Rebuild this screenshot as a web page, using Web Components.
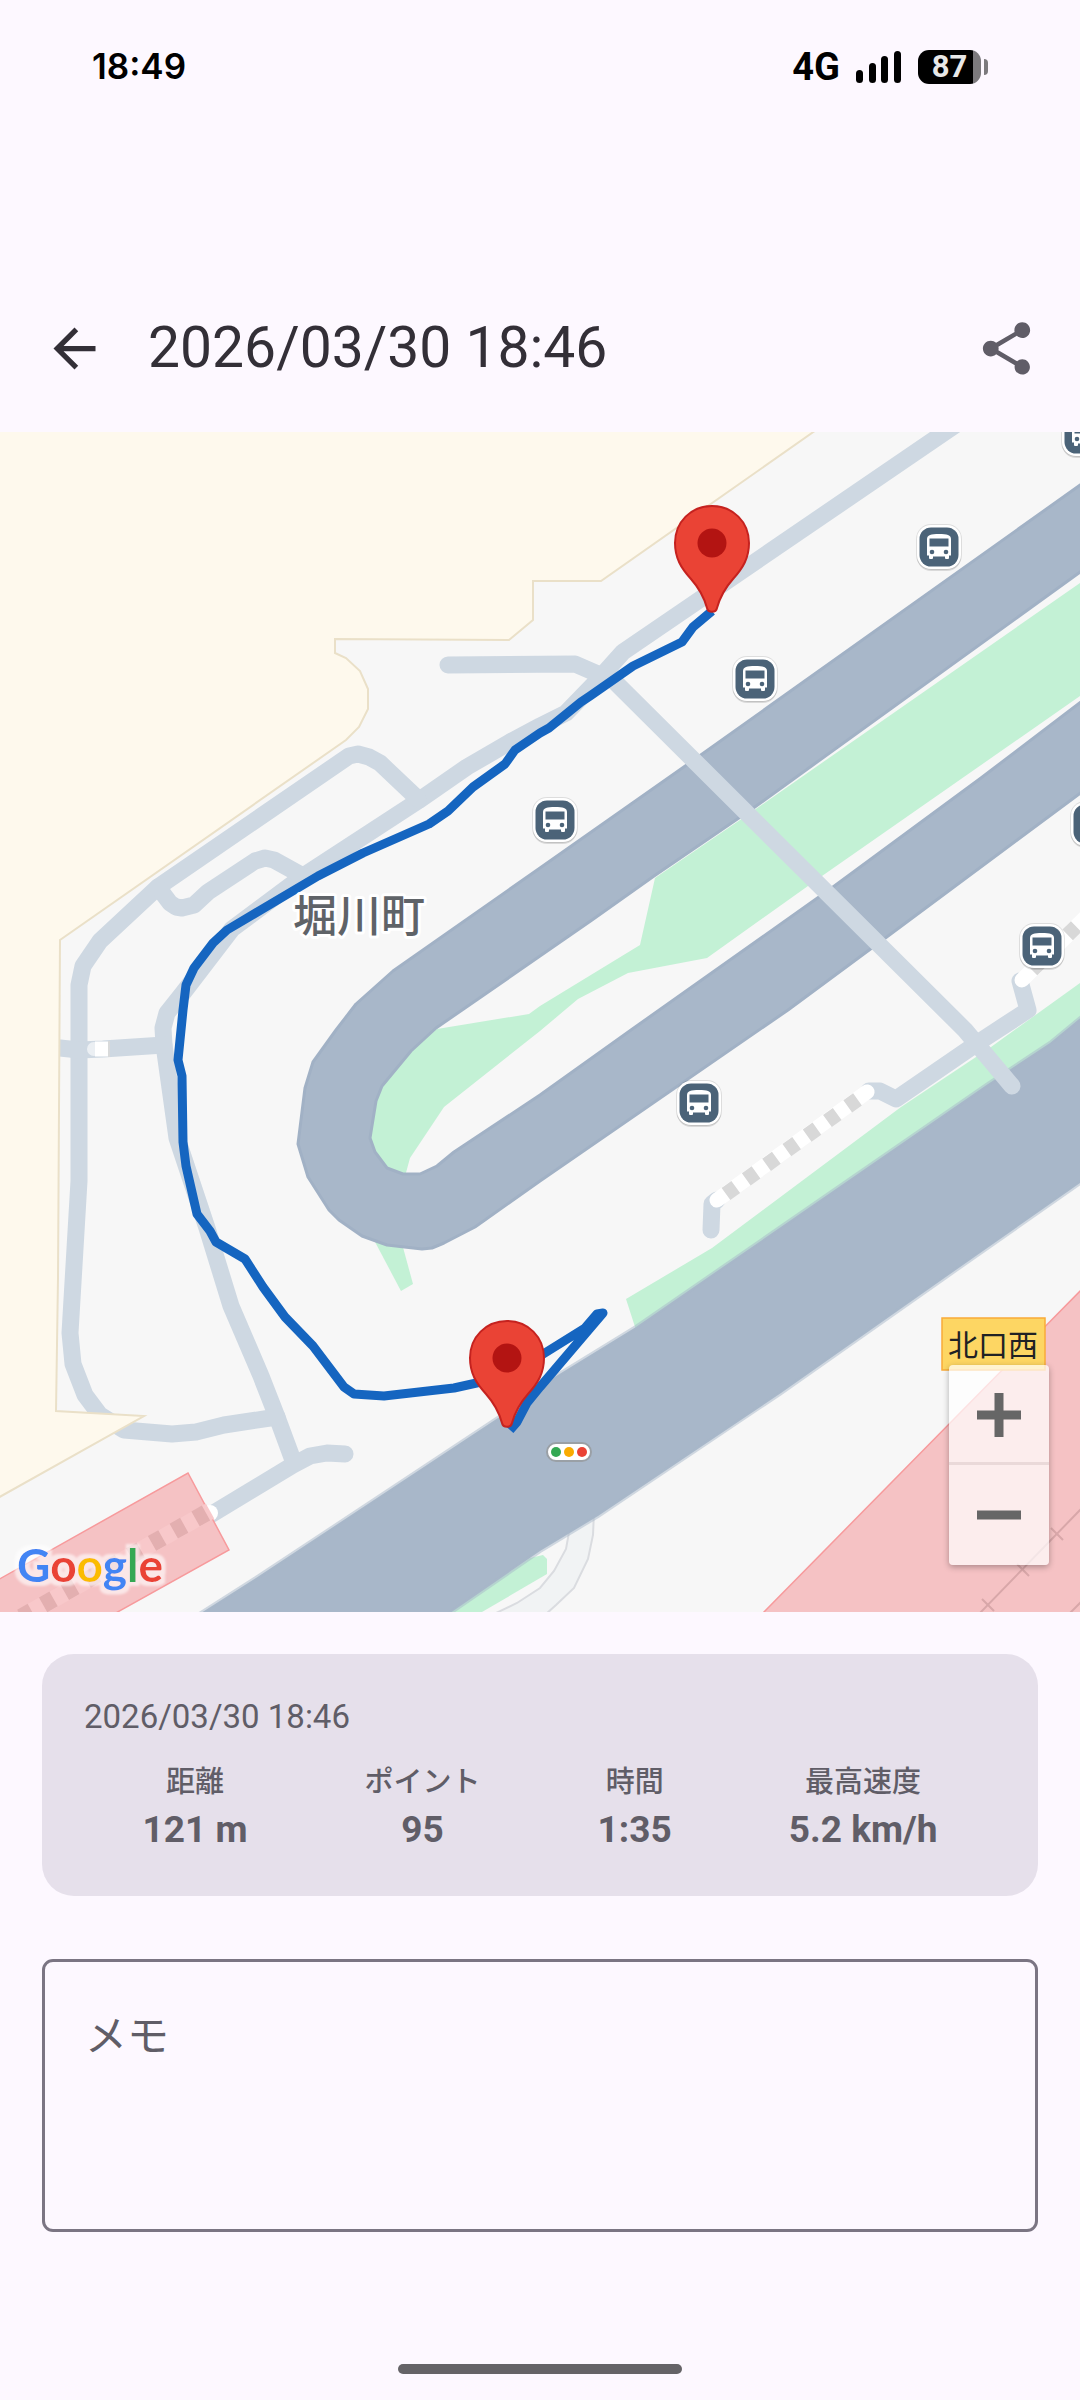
<!DOCTYPE html>
<html lang="ja">
<head>
<meta charset="utf-8">
<meta name="viewport" content="width=device-width, initial-scale=1">
<title>2026/03/30 18:46</title>
<style>
  html, body { margin: 0; }
  body {
    background: #fdf8ff;
    color: #605d67;
    font-family: Roboto, "Noto Sans CJK JP", sans-serif;
  }
</style>
</head>
<body>
<route-page>
  <status-bar slot="status" time="18:49" network="4G" battery="87"></status-bar>
  <app-bar slot="header">2026/03/30 18:46</app-bar>
  <route-map slot="map">
    <zoom-control></zoom-control>
  </route-map>
  <summary-card date="2026/03/30 18:46">
    <stat-item label="距離">121 m</stat-item>
    <stat-item label="ポイント">95</stat-item>
    <stat-item label="時間">1:35</stat-item>
    <stat-item label="最高速度">5.2 km/h</stat-item>
  </summary-card>
  <memo-field label="メモ"></memo-field>
</route-page>

<script>
class RoutePage extends HTMLElement {
  constructor() {
    super();
    const shadow = this.attachShadow({ mode: "open" });
    shadow.innerHTML = `
      <style>
        :host {
          display: flex;
          flex-direction: column;
          min-height: 100vh;
        }
        ::slotted([slot="map"]) {
          flex: 1;
        }
        main {
          display: flex;
          flex-direction: column;
          gap: 63px;
          padding: 42px 42px 132px;
        }
        .home {
          width: 284px;
          height: 10px;
          margin: 0 auto 26px;
          border-radius: 5px;
          background: #656367;
        }
      </style>
      <slot name="status"></slot>
      <slot name="header"></slot>
      <slot name="map"></slot>
      <main><slot></slot></main>
      <div class="home"></div>
    `;
  }
}

class StatusBar extends HTMLElement {
  constructor() {
    super();
    const shadow = this.attachShadow({ mode: "open" });
    shadow.innerHTML = `
      <style>
        :host {
          display: flex;
          justify-content: space-between;
          align-items: flex-start;
          box-sizing: border-box;
          height: 264px;
          padding: 46px 92px 0;
          color: #000;
        }
        .time {
          font: 600 35px/40px Inter, sans-serif;
        }
        .right {
          display: flex;
          align-items: center;
          gap: 16px;
          height: 42px;
        }
        .net {
          font-size: 38px;
          font-weight: 700;
          line-height: 42px;
        }
        .battery {
          display: flex;
          align-items: center;
          gap: 3px;
        }
        .cell {
          width: 63px;
          height: 34px;
          border-radius: 11px;
          background: linear-gradient(90deg, #000 55px, #7c7a7d 55px);
          color: #e8e8e8;
          font-size: 31px;
          font-weight: 700;
          line-height: 34px;
          text-align: center;
        }
        .nub {
          width: 4px;
          height: 16px;
          border-radius: 0 4px 4px 0;
          background: #7c7a7d;
        }
        svg { display: block; }
      </style>
      <span class="time"></span>
      <div class="right">
        <span class="net"></span>
        <svg width="46" height="32" viewBox="0 0 46 32" aria-hidden="true">
          <rect x="0" y="19" width="7" height="13" rx="3.5"/>
          <rect x="13" y="12" width="7" height="20" rx="3.5"/>
          <rect x="25" y="5" width="7" height="27" rx="3.5"/>
          <rect x="38" y="0" width="7" height="32" rx="3.5"/>
        </svg>
        <div class="battery"><span class="cell"></span><span class="nub"></span></div>
      </div>
    `;
    shadow.querySelector(".time").textContent = this.getAttribute("time");
    shadow.querySelector(".net").textContent = this.getAttribute("network");
    shadow.querySelector(".cell").textContent = this.getAttribute("battery");
  }
}

class AppBar extends HTMLElement {
  constructor() {
    super();
    const shadow = this.attachShadow({ mode: "open" });
    shadow.innerHTML = `
      <style>
        :host {
          display: flex;
          align-items: center;
          height: 168px;
          padding: 0 11px;
          color: #332f37;
        }
        h1 {
          flex: 1;
          margin: 0 0 0 11px;
          font-size: 57px;
          font-weight: 400;
          line-height: 74px;
        }
        button {
          display: grid;
          place-items: center;
          width: 126px;
          height: 126px;
          padding: 0;
          border: 0;
          background: none;
          color: inherit;
          cursor: pointer;
        }
        .share { color: #605d67; }
        svg {
          width: 63px;
          height: 63px;
          fill: currentColor;
        }
      </style>
      <button aria-label="戻る">
        <svg viewBox="0 0 24 24"><path d="M20 11H7.83l5.59-5.59L12 4l-8 8 8 8 1.41-1.41L7.83 13H20z"/></svg>
      </button>
      <h1><slot></slot></h1>
      <button class="share" aria-label="共有">
        <svg viewBox="0 0 24 24"><path d="M18 16.08c-.76 0-1.44.3-1.96.77L8.91 12.7c.05-.23.09-.46.09-.7s-.04-.47-.09-.7l7.05-4.11c.54.5 1.25.81 2.04.81 1.66 0 3-1.34 3-3s-1.34-3-3-3-3 1.34-3 3c0 .24.04.47.09.7L8.04 9.81C7.5 9.31 6.79 9 6 9c-1.66 0-3 1.34-3 3s1.34 3 3 3c.79 0 1.5-.31 2.04-.81l7.12 4.16c-.05.21-.08.43-.08.65 0 1.61 1.31 2.92 2.92 2.92s2.92-1.31 2.92-2.92-1.31-2.92-2.92-2.92z"/></svg>
      </button>
    `;
  }
}

const BUS_STOPS = [
  [1084, 434], [939, 547], [755, 679], [555, 820],
  [1093, 824], [1042, 946], [699, 1103],
];

const PATHS = [
  "970,415 623,652 597,681 566,713 540,726 510,742 467,767 418,801 303,876 232,929 183,993 167,1013 163,1028 164,1045 177,1138 207,1228 231,1306 261,1376 277,1417 294,1463",
  "418,799 380,763 369,757 358,754 349,756 158,887 100,941 83,966 79,985 79,1181 70,1333 73,1364 85,1395 100,1415 124,1430 172,1434 196,1432 224,1425 277,1417",
  "158,887 170,903 176,907 182,908 194,905 208,892 255,861 265,858 274,860 303,876",
  "60,1048 79,1050 103,1049 164,1045",
  "212,1514 293,1465 310,1456 327,1453 345,1454",
  "711,1230 712,1204 717,1200",
  "869,1091 880,1091 896,1099 979,1042 1028,1010 1020,981",
];

const TRACK = "712,611 693,627 682,642 633,666 590,696 581,702 549,728 540,733 515,750 505,764 473,787 448,811 429,824 363,853 318,876 227,930 213,943 194,968 186,985 183,1010 178,1060 182,1076 183,1142 186,1166 197,1214 210,1231 216,1242 245,1259 263,1287 285,1317 313,1346 344,1387 354,1394 384,1396 454,1388 490,1380 540,1356 585,1328 597,1314 603,1313 540,1387 527,1403 517,1422 510,1430";

class RouteMap extends HTMLElement {
  constructor() {
    super();
    const shadow = this.attachShadow({ mode: "open" });
    shadow.innerHTML = `
      <style>
        :host {
          display: block;
          position: relative;
          min-height: 600px;
          overflow: hidden;
          background: #f7f7f7;
        }
        .canvas {
          position: absolute;
          width: 100%;
          height: 100%;
        }
        .path {
          fill: none;
          stroke: #ced8e2;
          stroke-width: 17;
          stroke-linecap: round;
          stroke-linejoin: round;
        }
        .steps {
          fill: none;
          stroke: #fff;
          stroke-width: 15;
        }
        .steps.gap {
          stroke: #d8d8d8;
          stroke-dasharray: 12 13;
        }
        .green { fill: #c3f1d5; }
        .road {
          fill: #a8b7c9;
          stroke: #a1b1c5;
          stroke-width: 3;
          stroke-linejoin: round;
        }
        .avenue {
          fill: #a8b7c9;
          stroke: #a8b7c9;
          stroke-opacity: 0.5;
          stroke-width: 4;
        }
        .pink {
          fill: #f5c2c4;
          stroke: #f79a9c;
          stroke-width: 1.5;
        }
        .rail {
          fill: none;
          stroke: #d8a7a9;
          stroke-width: 2;
        }
        .town {
          fill: #5f6368;
          stroke: #fff;
          stroke-width: 6;
          stroke-linejoin: round;
          paint-order: stroke;
          font-size: 44px;
          font-weight: 500;
          text-anchor: middle;
        }
        .crossing {
          fill: #202124;
          font-size: 30px;
          text-anchor: middle;
        }
        .track {
          fill: none;
          stroke: #1565c0;
          stroke-width: 9;
          stroke-linejoin: round;
        }
        .logo {
          position: absolute;
          left: 8px;
          bottom: 4px;
          font: 700 46px/1 Lato, sans-serif;
        }
        ::slotted(zoom-control) {
          position: absolute;
          right: 31px;
          bottom: 47px;
        }
      </style>
      <svg class="canvas" viewBox="0 432 1080 1180" preserveAspectRatio="xMidYMid slice">
        <defs>
          <g id="bus">
            <rect x="-22" y="-20" width="44" height="44" rx="14" fill="#000" opacity=".12"/>
            <rect x="-23" y="-23" width="46" height="46" rx="15" fill="#000" opacity=".1"/>
            <rect x="-22" y="-22" width="44" height="44" rx="14" fill="#fff"/>
            <rect x="-19.5" y="-19.5" width="39" height="39" rx="11.5" fill="#4b6378"/>
            <path d="M-12 8.5V-8C-12-12-8-13 0-13S12-12 12-8V8.5H10V11Q10 12 9 12H7Q6 12 6 11V9.5H-6V11Q-6 12-7 12H-9Q-10 12-10 11V8.5Z" fill="#fff"/>
            <path d="M-9.5-8.5h19v8h-19z" fill="#4b6378"/>
            <circle cx="-7" cy="5" r="2.3" fill="#4b6378"/>
            <circle cx="7" cy="5" r="2.3" fill="#4b6378"/>
          </g>
          <g id="pin">
            <path d="M0-37C21-37 37-21 37 0C37 15 31 25 21 36C13 45 8 54 5 65C4 70-4 70-5 65C-8 54-13 45-21 36C-31 25-37 15-37 0C-37-21-21-37 0-37Z" fill="#ea4335" stroke="#c5221f" stroke-width="2"/>
            <circle r="14.5" fill="#b31412"/>
          </g>
        </defs>

        <g class="green">
          <path d="M1080 583L740 820L655 878L640 945L540 1006L529 1014L437 1029L380 1060L360 1140L390 1185L404 1180L410 1158L444 1107L540 1031L578 999L628 973L707 958L822 876L1080 696Z"/>
          <path d="M374 1240L401 1291L413 1284L401 1240Z"/>
          <path d="M626 1299L712 1248L901 1107L991 1047L1080 983V1040L636 1330Z"/>
          <path d="M449 1612L530 1558L543 1555L547 1559V1574L482 1612Z"/>
        </g>

        <path fill="#f1f3f4" d="M570 1510V1527L566 1549L554 1571L540 1588L517 1603L494 1614H549L556 1605L574 1588L588 1559L593 1535L594 1510Z"/>
        <path fill="none" stroke="#dadce0" stroke-width="2" d="M570 1510V1527L566 1549L554 1571L540 1588L517 1603L494 1614M594 1505V1512L593 1535L588 1559L574 1588L556 1605L546 1614"/>

        <path class="road" d="M1090 478L698 757L540 868L393 971L356 1004L336 1030L313 1062L305 1088L298 1144L308 1177L329 1210L339 1220L362 1236L387 1245L422 1249L432 1248L444 1243L475 1227L540 1181L788 1010L884 939L1090 786V695L981 778L833 887L631 1030L540 1095L454 1152L437 1166L420 1174L403 1174L387 1168L375 1152L370 1138L376 1101L382 1086L411 1051L436 1028L465 1008L540 956L592 920L654 876L752 809L1090 565Z"/>
        <path class="avenue" d="M1090 1010L1050 1043L988 1084L636 1327L540 1386L501 1416L256 1578L190 1620H440L540 1551L598 1516L781 1393L943 1279L1090 1176Z"/>

        <g id="paths"></g>
        <polyline class="path" points="448,665 575,664 614,681 965,1030 1012,1086"/>

        <path d="M95 1049h13" stroke="#fff" stroke-width="15"/>
        <circle cx="94" cy="1049" r="7" fill="#fff" opacity=".6"/>
        <path d="M109 1041v16" stroke="#e3dcd3" stroke-width="1"/>
        <circle cx="210" cy="1513" r="8" fill="#fff"/>
        <path class="steps" stroke-linecap="round" d="M717 1200L867 1092"/>
        <path class="steps gap" d="M726 1194L858 1099"/>
        <path class="steps" stroke-linecap="round" d="M1022 980L1090 913"/>
        <path class="steps gap" d="M1032 970L1090 913"/>

        <path fill="#fef9ed" stroke="#eae0c8" stroke-width="2" d="M-4 428H819L601 581H533V620L509 640L335 639V653L346 658L360 671L368 689V709L359 727L346 740L60 940L58 1278L56 1411L144 1416L-4 1499Z"/>

        <path class="pink" d="M-4 1581L188 1473L229 1550L114 1614H-4Z"/>
        <path d="M210 1511L22 1617" stroke="#f8c8ca" stroke-width="17"/>
        <path d="M206 1513L18 1619" stroke="#e3afb0" stroke-width="17" stroke-dasharray="12 13"/>
        <path class="pink" d="M1084 1287L762 1614H1084Z"/>
        <path class="rail" d="M1082 1508L979 1614M1082 1601L1069 1614"/>
        <path class="rail" stroke-width="3" d="M1051 1528L1063 1540M1017 1564L1029 1576M982 1599L994 1611"/>

        <g id="stops"></g>

        <rect x="547" y="1443" width="44" height="18" rx="9" fill="#fff" stroke="#9aa0a6" stroke-width="2"/>
        <circle cx="556" cy="1452" r="5" fill="#34a853"/>
        <circle cx="569" cy="1452" r="5" fill="#f9ab00"/>
        <circle cx="582" cy="1452" r="5" fill="#ea4335"/>

        <rect x="942" y="1318" width="103" height="52" fill="#fdd663" stroke="#f9ab38" stroke-width="1.5"/>
        <text class="crossing" x="993" y="1356">北口西</text>

        <polyline class="track" points="${TRACK}"/>
        <text class="town" x="359" y="932">堀川町</text>
        <use href="#pin" x="712" y="543"/>
        <use href="#pin" x="507" y="1358"/>
      </svg>
      <svg class="logo" width="170" height="80" role="img" aria-label="Google">
        <filter id="halo" x="-10%" y="-20%" width="120%" height="140%">
          <feMorphology in="SourceAlpha" operator="dilate" radius="4"/>
          <feGaussianBlur stdDeviation="1" result="grow"/>
          <feFlood flood-color="#fff" flood-opacity=".6"/>
          <feComposite in2="grow" operator="in"/>
          <feMerge><feMergeNode/><feMergeNode in="SourceGraphic"/></feMerge>
        </filter>
        <text x="9" y="54" filter="url(#halo)"><tspan fill="#4285f4">G</tspan><tspan fill="#ea4335">o</tspan><tspan fill="#fbbc04">o</tspan><tspan fill="#4285f4">g</tspan><tspan fill="#34a853">l</tspan><tspan fill="#ea4335">e</tspan></text>
      </svg>
      <slot></slot>
    `;
    shadow.querySelector("#paths").innerHTML = PATHS.map(
      (points) => `<polyline class="path" points="${points}"/>`
    ).join("");
    shadow.querySelector("#stops").innerHTML = BUS_STOPS.map(
      ([x, y]) => `<use href="#bus" x="${x}" y="${y}"/>`
    ).join("");
  }
}

class ZoomControl extends HTMLElement {
  constructor() {
    super();
    const shadow = this.attachShadow({ mode: "open" });
    shadow.innerHTML = `
      <style>
        :host {
          display: flex;
          flex-direction: column;
          width: 100px;
          border-radius: 4px;
          background: rgba(255, 255, 255, 0.7);
          box-shadow: 0 2px 6px rgba(0, 0, 0, 0.3);
        }
        button {
          display: grid;
          place-items: center;
          height: 100px;
          padding: 0;
          border: 0;
          background: none;
          cursor: pointer;
        }
        button + button {
          box-shadow: 0 -3px rgba(180, 160, 160, 0.25);
        }
        path {
          stroke: #666;
          stroke-width: 9;
        }
      </style>
      <button id="in" aria-label="拡大">
        <svg width="44" height="44"><path d="M0 22H44M22 0V44"/></svg>
      </button>
      <button id="out" aria-label="縮小">
        <svg width="44" height="44"><path d="M0 22H44"/></svg>
      </button>
    `;
    shadow.addEventListener("click", (event) => {
      const button = event.target.closest("button");
      if (!button) return;
      this.dispatchEvent(
        new CustomEvent("zoom", { detail: button.id, bubbles: true })
      );
    });
  }
}

class SummaryCard extends HTMLElement {
  constructor() {
    super();
    const shadow = this.attachShadow({ mode: "open" });
    shadow.innerHTML = `
      <style>
        :host {
          display: flex;
          flex-direction: column;
          gap: 21px;
          padding: 42px;
          border-radius: 32px;
          background: #e6e0eb;
        }
        time {
          font-size: 33px;
          line-height: 42px;
        }
        .stats {
          display: flex;
          justify-content: space-around;
        }
      </style>
      <time></time>
      <div class="stats"><slot></slot></div>
    `;
    shadow.querySelector("time").textContent = this.getAttribute("date");
  }
}

class StatItem extends HTMLElement {
  constructor() {
    super();
    const shadow = this.attachShadow({ mode: "open" });
    shadow.innerHTML = `
      <style>
        :host {
          display: block;
          text-align: center;
        }
        dl, dd { margin: 0; }
        dt {
          font-size: 29px;
          font-weight: 500;
          line-height: 46px;
        }
        dd {
          font-size: 37px;
          font-weight: 700;
          line-height: 49px;
        }
      </style>
      <dl>
        <dt></dt>
        <dd><slot></slot></dd>
      </dl>
    `;
    shadow.querySelector("dt").textContent = this.getAttribute("label");
  }
}

class MemoField extends HTMLElement {
  constructor() {
    super();
    const shadow = this.attachShadow({ mode: "open" });
    shadow.innerHTML = `
      <style>
        :host {
          display: grid;
          box-sizing: border-box;
          height: 273px;
          border: 3px solid #7b7583;
          border-radius: 11px;
          font-size: 42px;
          line-height: 63px;
        }
        label, textarea {
          grid-area: 1 / 1;
          padding: 43px 40px;
        }
        label {
          pointer-events: none;
        }
        textarea {
          border: 0;
          outline: 0;
          resize: none;
          background: none;
          color: inherit;
          font: inherit;
        }
        .hidden { visibility: hidden; }
      </style>
      <label for="memo"></label>
      <textarea id="memo"></textarea>
    `;
    this.label = shadow.querySelector("label");
    this.memo = shadow.querySelector("textarea");
    this.label.textContent = this.getAttribute("label");
    this.memo.addEventListener("input", () => {
      this.label.classList.toggle("hidden", this.memo.value != "");
    });
  }
}

customElements.define("route-page", RoutePage);
customElements.define("status-bar", StatusBar);
customElements.define("app-bar", AppBar);
customElements.define("route-map", RouteMap);
customElements.define("zoom-control", ZoomControl);
customElements.define("summary-card", SummaryCard);
customElements.define("stat-item", StatItem);
customElements.define("memo-field", MemoField);
</script>
</body>
</html>
